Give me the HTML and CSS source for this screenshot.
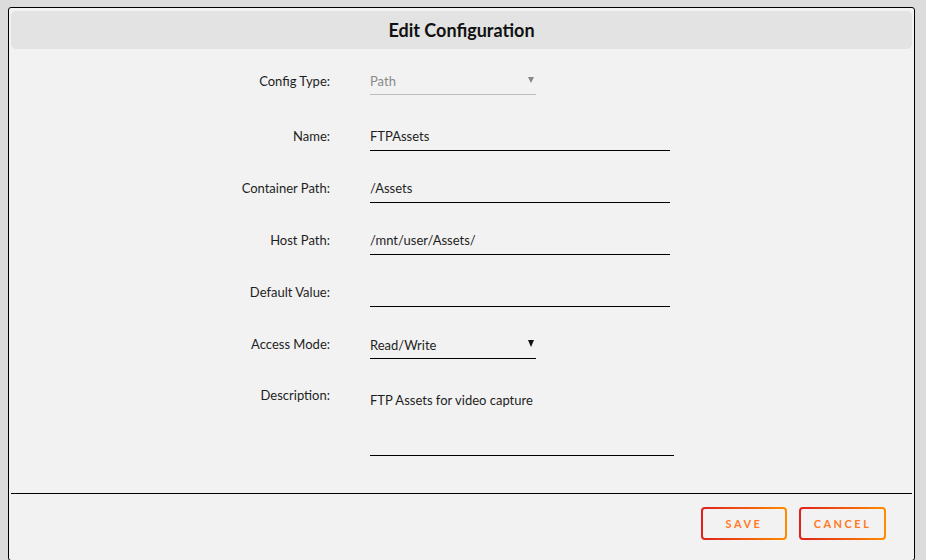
FILE: index.html
```html
<!DOCTYPE html>
<html>
	<head>
		<meta charset="utf-8">
		<title>Edit Configuration</title>
		<link rel="stylesheet" href="styles.css">
	</head>
	<body>
		<div class="dialog">
			<div class="title">Edit Configuration</div>
			<div class="form">
				<label class="lbl">Config Type:</label>
				<div class="field select disabled first"><span>Path</span><i class="arrow"></i></div>

				<label class="lbl">Name:</label>
				<div class="field">FTPAssets</div>

				<label class="lbl">Container Path:</label>
				<div class="field">/Assets</div>

				<label class="lbl">Host Path:</label>
				<div class="field">/mnt/user/Assets/</div>

				<label class="lbl">Default Value:</label>
				<div class="field"></div>

				<label class="lbl">Access Mode:</label>
				<div class="field select"><span>Read/Write</span><i class="arrow"></i></div>

				<label class="lbl top">Description:</label>
				<div class="field area">FTP Assets for video capture</div>
			</div>
			<div class="sep"></div>
			<div class="buttons">
				<button class="btn">SAVE</button>
				<button class="btn">CANCEL</button>
			</div>
		</div>
	</body>
</html>
```

FILE: styles.css
```css
*{
	padding: 0;
	margin: 0;
	box-sizing: border-box;
}
body{
	background: #dcdcdc;
	font-family: "Lato", "Noto Sans", sans-serif;
	font-size: 13px;
	color: #1e1e1e;
	height: 560px;
	overflow: hidden;
}
.dialog{
	margin: 7px 0 0 8px;
	width: 907px;
	height: 554px;
	background: #f2f2f2;
	border: 1px solid #000;
	border-radius: 3px;
	padding: 3px 2px 0 2px;
}
.title{
	height: 38px;
	line-height: 38px;
	background: #e3e3e3;
	border-radius: 5px;
	text-align: center;
	font-size: 18px;
	font-weight: bold;
	color: #111;
}
.form{
	display: grid;
	grid-template-columns: 319px 1fr;
	column-gap: 40px;
	row-gap: 24px;
	margin-top: 19px;
}
.lbl{
	text-align: right;
	line-height: 27px;
	height: 28px;
}
.lbl.top{
	line-height: 24px;
}
.field{
	width: 300px;
	height: 28px;
	line-height: 26px;
	border-bottom: 1px solid #000;
}
.field.first{
	height: 27px;
	margin-bottom: 4px;
}
.select{
	width: 166px;
	display: flex;
	justify-content: space-between;
	align-items: center;
}
.select .arrow{
	width: 0;
	height: 0;
	border-left: 3px solid transparent;
	border-right: 3px solid transparent;
	border-top: 7px solid #111;
	margin-right: 2px;
	margin-top: -3px;
}
.disabled{
	color: #8a8a8a;
	border-bottom-color: #bdbdbd;
}
.disabled .arrow{
	border-top-color: #888;
	border-top-width: 6px;
}
.area{
	width: 304px;
	height: 73px;
	line-height: 16px;
	padding-top: 9px;
}
.sep{
	margin-top: 37px;
	border-top: 1px solid #000;
}
.buttons{
	display: flex;
	justify-content: flex-end;
	gap: 12px;
	margin-top: 13px;
	padding-right: 26px;
}
.btn{
	width: 86px;
	height: 33px;
	border: 2px solid transparent;
	border-radius: 4px;
	background: linear-gradient(#f2f2f2, #f2f2f2) padding-box, linear-gradient(90deg, #e0201c, #ff8c00) border-box;
	font-family: "Lato", "Noto Sans", sans-serif;
	font-size: 11px;
	font-weight: bold;
	letter-spacing: 2.5px;
	color: #ff7a22;
	cursor: pointer;
}
.btn + .btn{
	width: 87px;
}
```
